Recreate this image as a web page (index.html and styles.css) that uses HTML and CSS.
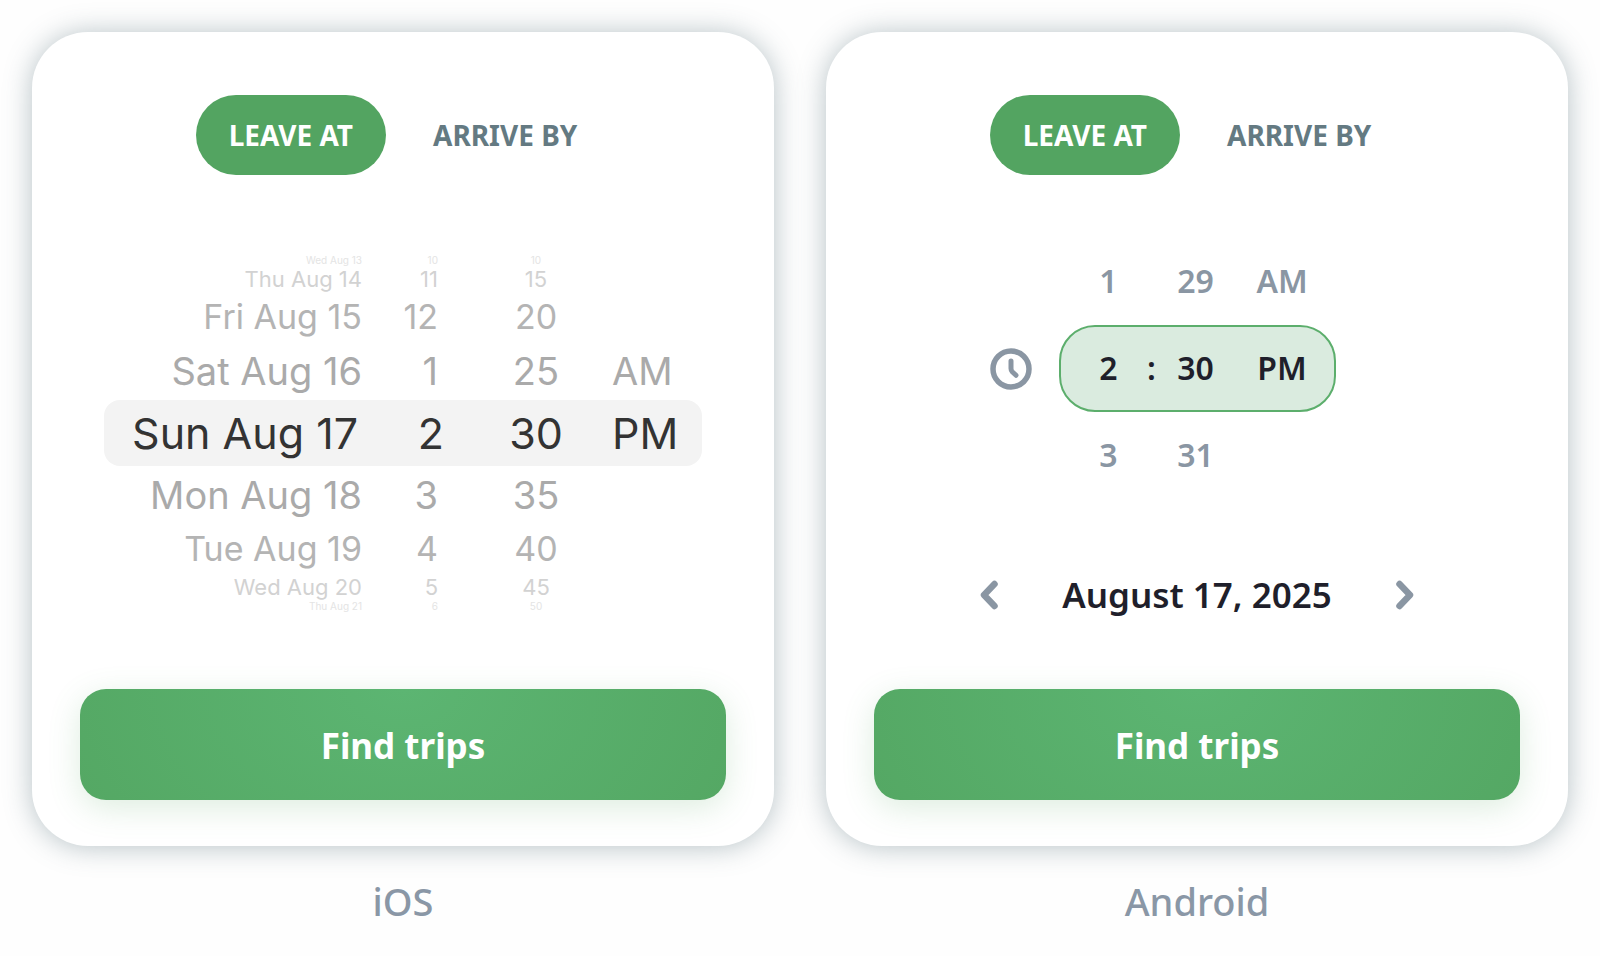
FILE: index.html
```html
<!doctype html>
<html lang="en">
<head>
<meta charset="utf-8">
<title>Find trips</title>
<meta name="viewport" content="width=device-width,initial-scale=1.0">
<link rel="stylesheet" href="styles.css">
</head>
<body>
<div id="wrap">
	<section class="platform">
		<div class="card">
			<div class="tabs">
				<button type="button" class="tab active">LEAVE AT</button>
				<button type="button" class="tab">ARRIVE BY</button>
			</div>
			<div class="picker">
				<div class="wheel_ios">
					<div class="row far4"><span>Wed Aug 13</span><span>10</span><span>10</span><span></span></div>
					<div class="row far3"><span>Thu Aug 14</span><span>11</span><span>15</span><span></span></div>
					<div class="row far2"><span>Fri Aug 15</span><span>12</span><span>20</span><span></span></div>
					<div class="row far1"><span>Sat Aug 16</span><span>1</span><span>25</span><span>AM</span></div>
					<div class="row current"><span>Sun Aug 17</span><span>2</span><span>30</span><span>PM</span></div>
					<div class="row far1"><span>Mon Aug 18</span><span>3</span><span>35</span><span></span></div>
					<div class="row far2"><span>Tue Aug 19</span><span>4</span><span>40</span><span></span></div>
					<div class="row far3"><span>Wed Aug 20</span><span>5</span><span>45</span><span></span></div>
					<div class="row far4"><span>Thu Aug 21</span><span>6</span><span>50</span><span></span></div>
				</div>
			</div>
			<button type="button" class="find">Find trips</button>
		</div>
		<h2>iOS</h2>
	</section>

	<section class="platform">
		<div class="card">
			<div class="tabs">
				<button type="button" class="tab active">LEAVE AT</button>
				<button type="button" class="tab">ARRIVE BY</button>
			</div>
			<div class="picker">
				<div class="time">
					<svg class="clock" viewBox="0 0 42 42" width="42" height="42" fill="none" stroke="currentColor" stroke-linecap="round" stroke-linejoin="round">
						<circle cx="21" cy="21" r="18" stroke-width="5.5"/>
						<path d="M21 13v7.500q0 2 1.200 3.200l3.800 3.600" stroke-width="5"/>
					</svg>
					<div class="wheel_android">
						<div class="row"><span>1</span><i></i><span>29</span><span>AM</span></div>
						<div class="row current"><span>2</span><i>:</i><span>30</span><span>PM</span></div>
						<div class="row"><span>3</span><i></i><span>31</span><span></span></div>
					</div>
				</div>
				<div class="date">
					<button type="button" class="arrow" aria-label="Previous day">
						<svg viewBox="0 0 18 30" width="18" height="30" fill="none" stroke="currentColor" stroke-width="6.5" stroke-linecap="round" stroke-linejoin="round"><path d="M14.500 4 4 15l10.500 11"/></svg>
					</button>
					<span>August 17, 2025</span>
					<button type="button" class="arrow" aria-label="Next day">
						<svg viewBox="0 0 18 30" width="18" height="30" fill="none" stroke="currentColor" stroke-width="6.5" stroke-linecap="round" stroke-linejoin="round"><path d="M3.500 4 14 15 3.500 26"/></svg>
					</button>
				</div>
			</div>
			<button type="button" class="find">Find trips</button>
		</div>
		<h2>Android</h2>
	</section>
</div>
</body>
</html>
```

FILE: styles.css
```css
body,h2,div,span,i,button{margin: 0; padding: 0;}
i{font-style: normal;}
button{border: 0; background: none; font-family: inherit; cursor: pointer;}
svg{display: block;}
body{
	background-color: #fefefe;
	font-family: "Noto Sans","Open Sans",sans-serif;
	color: #1f1f2b;
}
#wrap{
	display: flex;
	gap: 52px;
	padding: 32px;
}
.platform{
	flex: 1;
	min-width: 0;
}
.platform h2{
	padding-top: 27px;
	font-size: 38px;
	line-height: 56px;
	font-weight: 500;
	text-align: center;
	color: #8a97a6;
}
.card{
	box-sizing: border-box;
	padding: 63px 48px 46px;
	border-radius: 56px;
	background-color: #fff;
	box-shadow: 0 1px 28px rgba(96,120,128,0.45);
}

/* leave / arrive switch */
.tabs{
	display: flex;
	justify-content: center;
	gap: 14px;
}
.tab{
	padding: 0 33px;
	border-radius: 40px;
	font-size: 28px;
	line-height: 80px;
	font-weight: 700;
	color: #647a82;
}
.tab.active{
	background-color: #53a461;
	color: #fff;
}
.picker{
	display: flex;
	flex-direction: column;
	justify-content: center;
	align-items: center;
	gap: 65px;
	height: 514px;
}

/* iOS wheel */
.wheel_ios{
	width: 598px;
	max-width: 100%;
	padding-top: 2px;
	font-family: Inter,"Liberation Sans",sans-serif;
}
.wheel_ios .row{
	display: grid;
	grid-template-columns: 258px 98px 152px 1fr;
	align-items: center;
	white-space: nowrap;
}
.wheel_ios span:nth-child(1),
.wheel_ios span:nth-child(2){
	text-align: right;
}
.wheel_ios span:nth-child(2){
	padding-right: 22px;
}
.wheel_ios span:nth-child(3){
	text-align: center;
}
.wheel_ios .current{
	grid-template-columns: 254px 102px 152px 1fr;
	height: 66px;
	border-radius: 16px;
	background-color: #f3f3f3;
	font-size: 43px;
	line-height: 66px;
	color: #333;
}
.wheel_ios .current span:nth-child(2){
	padding-right: 16px;
}
.wheel_ios .far1{
	height: 58px;
	font-size: 38px;
	line-height: 58px;
	color: #aaa;
}
.wheel_ios .far2{
	height: 50px;
	font-size: 34px;
	line-height: 50px;
	color: #b4b4b4;
}
.wheel_ios .far3{
	height: 26px;
	font-size: 22px;
	line-height: 26px;
	color: #d2d2d2;
}
.wheel_ios .far4{
	height: 12px;
	font-size: 10px;
	line-height: 12px;
	color: #e4e4e4;
}

/* Android wheel, the clock hangs on its left */
.time{
	display: grid;
	grid-template-columns: 1fr auto 1fr;
	align-items: center;
	gap: 27px;
	width: 100%;
}
.clock{
	justify-self: end;
	color: #8a96a3;
}
.wheel_android .row{
	display: grid;
	grid-template-columns: 62px 24px 64px 89px;
	align-items: center;
	box-sizing: border-box;
	height: 87px;
	padding: 0 17px 2px;
	border: 2px solid transparent;
	border-radius: 36px;
	font-size: 32px;
	font-weight: 600;
	text-align: center;
	color: #8a96a3;
}
.wheel_android .row span:last-child{
	padding-left: 20px;
}
.wheel_android .current{
	border-color: #5cae6c;
	background-color: #daebdf;
	color: #1f1f2b;
}
.date{
	display: flex;
	align-items: center;
	gap: 64px;
	font-size: 35px;
	line-height: 62px;
	font-weight: 600;
}
.arrow{
	color: #8a96a3;
}
.find{
	display: block;
	width: 100%;
	padding-top: 2px;
	border-radius: 26px;
	background: radial-gradient(380px 260px at 50% 0, #5cb572, #54a763);
	box-shadow: 0 8px 32px rgba(83,164,97,0.2);
	font-size: 35px;
	line-height: 109px;
	font-weight: 700;
	color: #fff;
}
```
